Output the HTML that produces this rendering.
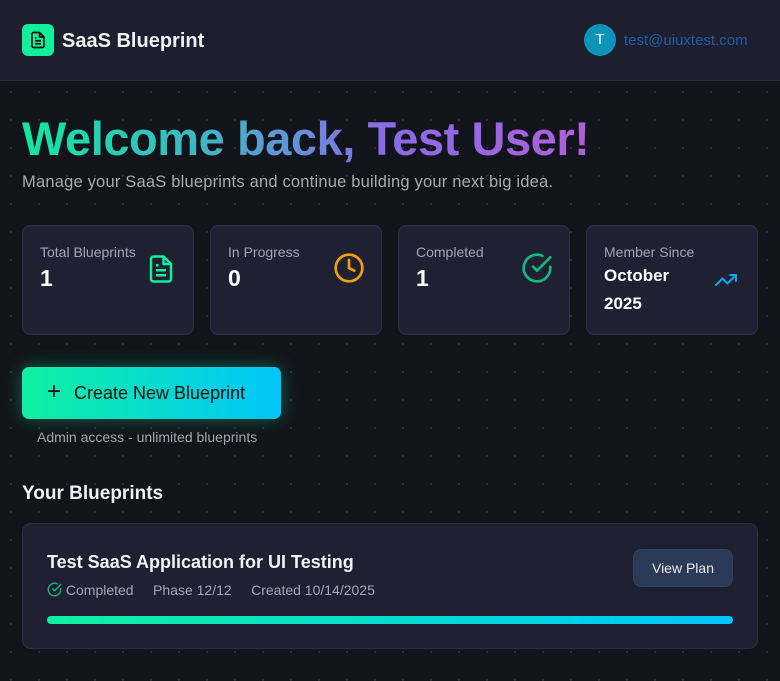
<!DOCTYPE html>
<html><head><meta charset="utf-8"><style>
*{box-sizing:border-box;margin:0;padding:0}
body{width:780px;height:681px;overflow:hidden;background:#12141c;font-family:"Liberation Sans",sans-serif;color:#fff;position:relative}
.dots{position:absolute;left:0;top:81px;right:0;bottom:0;background-image:radial-gradient(circle,#2a3038 1px,transparent 1.3px);background-size:28px 28px;background-position:-3px -3px}
header{position:absolute;left:0;top:0;width:780px;height:81px;background:#1d1f2e;border-bottom:1px solid #2d3044}
.logo{position:absolute;left:22px;top:24px;width:32px;height:32px;border-radius:6px;background:#12ef9a;display:flex;align-items:center;justify-content:center}
.brand{position:absolute;left:62px;top:30px;font-size:20px;font-weight:bold;color:#f2f2f4}
.av{position:absolute;left:584px;top:24px;width:32px;height:32px;border-radius:50%;background:#0e93b8;text-align:center;line-height:32px;font-size:15px}
.mail{position:absolute;left:624px;top:32px;font-size:15px;color:#1d5fa8}
h1{position:absolute;left:22px;top:111px;font-size:47px;font-weight:bold;letter-spacing:-0.45px;background:linear-gradient(90deg,#10e8a0 0%,#45b0c8 35%,#8a6ae8 65%,#b060d8 100%);-webkit-background-clip:text;color:transparent;white-space:nowrap}
.sub{position:absolute;left:22px;top:173px;font-size:16.5px;color:#a6a9b3;letter-spacing:0.2px}
.card{position:absolute;top:225px;width:172px;height:110px;background:#1f2133;border:1px solid #2d3045;border-radius:8px}
.card .l{position:absolute;left:17px;top:18px;font-size:14px;color:#a3a6b0}
.card .v{position:absolute;left:17px;top:39px;font-size:23px;font-weight:bold}
.card svg{position:absolute}
.btn{position:absolute;left:22px;top:367px;width:259px;height:52px;border-radius:7px;background:linear-gradient(90deg,#10f0a0,#00c6fb);box-shadow:0 0 18px rgba(16,240,160,.35);color:#111;font-size:18px;line-height:52px;padding-left:52px}
.btn span{position:absolute;left:25px;top:-1px;font-size:24px;font-weight:300}
.adm{position:absolute;left:37px;top:429px;font-size:14px;color:#a3a6b0}
h2{position:absolute;left:22px;top:483px;font-size:19px;font-weight:bold;color:#f2f2f4}
.bp{position:absolute;left:22px;top:523px;width:736px;height:126px;background:#1f2133;border:1px solid #2d3045;border-radius:9px}
.bp .t{position:absolute;left:24px;top:28px;font-size:18px;font-weight:bold;color:#f2f2f4}
.bp .m{position:absolute;left:24px;top:58px;font-size:14px;color:#a3a6b0}
.vp{position:absolute;left:610px;top:25px;width:100px;height:38px;border-radius:8px;background:#2c3957;border:1px solid #34405e;font-size:14px;text-align:center;line-height:36px;color:#e8eaf0}
.bar{position:absolute;left:24px;top:92px;width:686px;height:8px;border-radius:4px;background:linear-gradient(90deg,#10f0a0,#00c6fb)}
</style></head><body>
<div class="dots"></div>
<header>
<div class="logo"><svg width="18" height="18" viewBox="0 0 24 24" fill="none" stroke="#111" stroke-width="2.2" stroke-linejoin="round"><path d="M14 2H6a2 2 0 0 0-2 2v16a2 2 0 0 0 2 2h12a2 2 0 0 0 2-2V8z"/><path d="M14 2v6h6M8 13h8M8 17h8M8 9h2"/></svg></div>
<div class="brand">SaaS Blueprint</div>
<div class="av">T</div>
<div class="mail">test@uiuxtest.com</div>
</header>
<h1>Welcome back, Test User!</h1>
<div class="sub">Manage your SaaS blueprints and continue building your next big idea.</div>

<div class="card" style="left:22px"><div class="l">Total Blueprints</div><div class="v">1</div>
<svg style="left:123px;top:26px" width="30" height="34" viewBox="0 0 24 24" fill="none" stroke="#12ef9a" stroke-width="2" stroke-linejoin="round"><path d="M14 2H6a2 2 0 0 0-2 2v16a2 2 0 0 0 2 2h12a2 2 0 0 0 2-2V8z"/><path d="M14 2v6h6M8 13h8M8 17h8M8 9h2"/></svg></div>
<div class="card" style="left:210px"><div class="l">In Progress</div><div class="v">0</div>
<svg style="left:122px;top:26px" width="32" height="32" viewBox="0 0 24 24" fill="none" stroke="#f59e0b" stroke-width="2" stroke-linecap="round"><circle cx="12" cy="12" r="10"/><path d="M12 6v6l4 2"/></svg></div>
<div class="card" style="left:398px"><div class="l">Completed</div><div class="v">1</div>
<svg style="left:122px;top:26px" width="32" height="32" viewBox="0 0 24 24" fill="none" stroke="#10b981" stroke-width="2" stroke-linecap="round" stroke-linejoin="round"><path d="M22 11.1V12a10 10 0 1 1-5.9-9.1"/><path d="M22 4 12 14l-3-3"/></svg></div>
<div class="card" style="left:586px"><div class="l">Member Since</div><div class="v" style="font-size:17px;line-height:28px;top:36px">October<br>2025</div>
<svg style="left:125px;top:42px" width="28" height="24" viewBox="0 0 24 24" fill="none" stroke="#0ea5e9" stroke-width="2" stroke-linecap="round" stroke-linejoin="round"><path d="M22 7l-8.5 8.5-5-5L2 17"/><path d="M16 7h6v6"/></svg></div>

<div class="btn"><span>+</span>Create New Blueprint</div>
<div class="adm">Admin access - unlimited blueprints</div>
<h2>Your Blueprints</h2>
<div class="bp">
<div class="t">Test SaaS Application for UI Testing</div>
<div class="m"><svg width="15" height="15" viewBox="0 0 24 24" fill="none" stroke="#10b981" stroke-width="2.2" stroke-linecap="round" stroke-linejoin="round" style="vertical-align:-2px"><path d="M22 11.1V12a10 10 0 1 1-5.9-9.1"/><path d="M22 4 12 14l-3-3"/></svg> Completed &nbsp;&nbsp;&nbsp; Phase 12/12 &nbsp;&nbsp;&nbsp; Created 10/14/2025</div>
<div class="vp">View Plan</div>
<div class="bar"></div>
</div>
</body></html>
